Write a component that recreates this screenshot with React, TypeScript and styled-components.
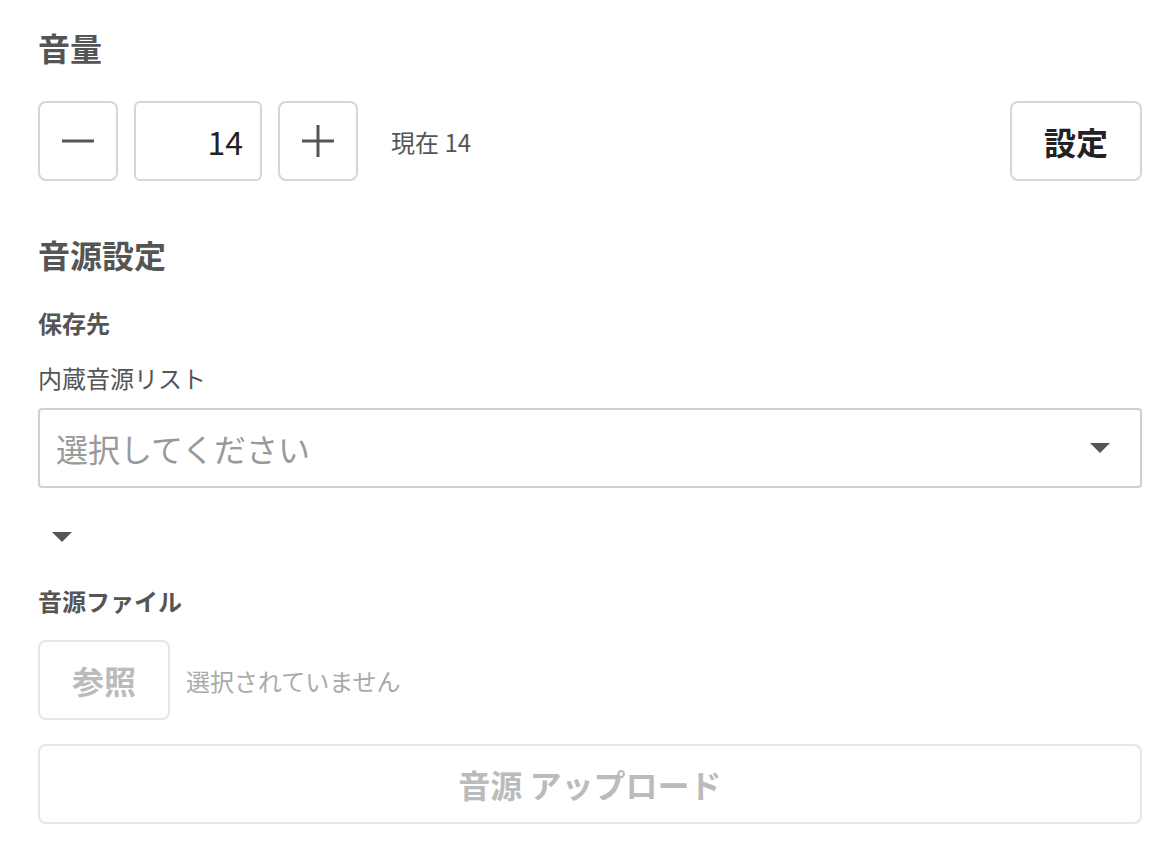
import React from "react";
import styled, { createGlobalStyle } from "styled-components";

const Global = createGlobalStyle`
  html, body { margin: 0; padding: 0; background: #fff; }
  body { font-family: "Noto Sans CJK JP", "Noto Sans", sans-serif; }
  * { box-sizing: border-box; }
`;

const Page = styled.div`
  display: flex;
  flex-direction: column;
  padding: 23px 34px 0 38px;
`;

const Title = styled.h1<{ $mt?: number }>`
  margin: ${(p) => p.$mt ?? 0}px 0 0;
  font-size: 32px;
  line-height: 48px;
  font-weight: 700;
  color: #555;
`;

const Label = styled.div<{ $mt: number; $bold?: boolean }>`
  margin-top: ${(p) => p.$mt}px;
  font-size: 24px;
  line-height: 36px;
  font-weight: ${(p) => (p.$bold ? 700 : 400)};
  color: #555;
`;

const Row = styled.div<{ $mt: number }>`
  margin-top: ${(p) => p.$mt}px;
  display: flex;
  align-items: center;
  gap: 16px;
  height: 80px;
`;

const IconButton = styled.button`
  width: 80px;
  height: 80px;
  display: flex;
  align-items: center;
  justify-content: center;
  border: 2px solid #d6d6d6;
  border-radius: 8px;
  background: #fff;
  padding: 0;
`;

const NumberBox = styled.div`
  width: 128px;
  height: 80px;
  display: flex;
  align-items: center;
  justify-content: flex-end;
  padding-right: 17px;
  border: 2px solid #d6d6d6;
  border-radius: 6px;
  font-family: "Noto Sans CJK JP", sans-serif;
  font-size: 32px;
  color: #222;
`;

const Current = styled.span`
  margin-left: 17px;
  font-size: 24px;
  color: #555;
`;

const TextButton = styled.button<{ $disabled?: boolean; $full?: boolean }>`
  height: 80px;
  width: ${(p) => (p.$full ? "100%" : "132px")};
  border: 2px solid ${(p) => (p.$disabled ? "#e6e6e6" : "#d6d6d6")};
  border-radius: 8px;
  background: #fff;
  font-family: "Noto Sans CJK JP", sans-serif;
  font-size: 32px;
  font-weight: 700;
  color: ${(p) => (p.$disabled ? "#bbb" : "#222")};
  padding: 0;
`;

const Spacer = styled.div`
  flex: 1;
`;

const Select = styled.div`
  margin-top: 12px;
  height: 80px;
  display: flex;
  align-items: center;
  justify-content: space-between;
  padding: 0 30px 0 16px;
  border: 2px solid #d0d0d0;
  border-radius: 4px;
  font-size: 32px;
  color: #999;
`;

const Triangle = styled.span`
  display: block;
  width: 0;
  height: 0;
  border-left: 10px solid transparent;
  border-right: 10px solid transparent;
  border-top: 10px solid #555;
`;

const Disclosure = styled.div`
  margin-top: 44px;
  padding-left: 14px;
  height: 10px;
`;

const FileNote = styled.span`
  font-size: 24px;
  color: #aaa;
`;

const UploadWrap = styled.div`
  margin-top: 24px;
  display: flex;
`;

const Minus = () => (
  <svg width="34" height="34" viewBox="0 0 34 34">
    <line x1="1" y1="17" x2="33" y2="17" stroke="#555" strokeWidth="3" />
  </svg>
);

const Plus = () => (
  <svg width="34" height="34" viewBox="0 0 34 34">
    <line x1="1" y1="17" x2="33" y2="17" stroke="#555" strokeWidth="3" />
    <line x1="17" y1="1" x2="17" y2="33" stroke="#555" strokeWidth="3" />
  </svg>
);

export default function App() {
  return (
    <>
      <Global />
      <Page>
        <Title>音量</Title>
        <Row $mt={30}>
          <IconButton aria-label="decrease">
            <Minus />
          </IconButton>
          <NumberBox>14</NumberBox>
          <IconButton aria-label="increase">
            <Plus />
          </IconButton>
          <Current>現在 14</Current>
          <Spacer />
          <TextButton>設定</TextButton>
        </Row>
        <Title $mt={49}>音源設定</Title>
        <Label $mt={27} $bold>
          保存先
        </Label>
        <Label $mt={19}>内蔵音源リスト</Label>
        <Select>
          <span>選択してください</span>
          <Triangle />
        </Select>
        <Disclosure>
          <Triangle />
        </Disclosure>
        <Label $mt={41} $bold>
          音源ファイル
        </Label>
        <Row $mt={21}>
          <TextButton $disabled>参照</TextButton>
          <FileNote>選択されていません</FileNote>
        </Row>
        <UploadWrap>
          <TextButton $disabled $full>
            音源 アップロード
          </TextButton>
        </UploadWrap>
      </Page>
    </>
  );
}
